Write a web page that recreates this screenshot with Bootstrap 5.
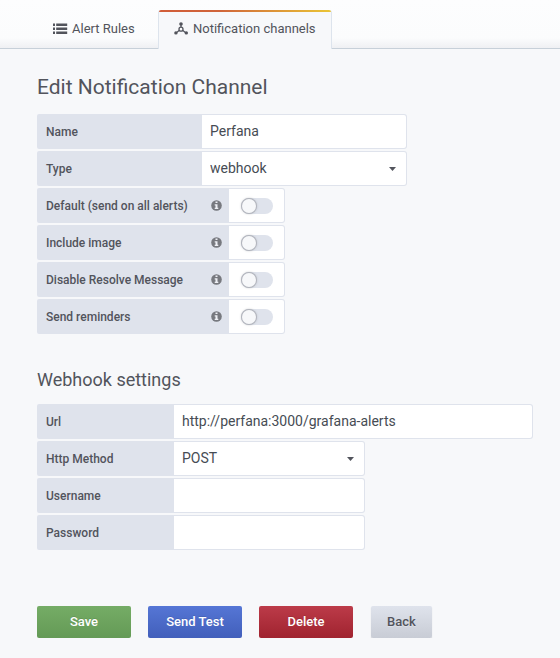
<!DOCTYPE html>
<html lang="en">
<head>
<meta charset="utf-8">
<meta name="viewport" content="width=device-width, initial-scale=1">
<title>Edit Notification Channel</title>
<link href="https://cdn.jsdelivr.net/npm/bootstrap@5.3.0/dist/css/bootstrap.min.css" rel="stylesheet">
<style>
body { font-family: Roboto, "Liberation Sans", sans-serif; font-size: 14px; line-height: 21px; color: #52545c; background: #f7f8fa; }
.page-header { height: 49px; padding: 10px 0 0 37px; border-bottom: 1px solid #c7d0d9; background: linear-gradient(180deg, #fdfdfe 0, #fbfcfd 38px, #eff0f3 48px); }
.page-tabs { border: 0; height: 39px; }
.page-tabs .nav-link { height: 39px; padding: 0 15px 2px; border: 1px solid transparent; border-radius: 3px 3px 0 0; margin: 0; color: #52545c; font-size: 13px; line-height: 35px; }
.page-tabs .tab-rules { width: 121px; }
.page-tabs .nav-link.active { color: #52545c; background: #f7f8fa; border-color: #dde4ed; border-top: 0; border-bottom: 0; width: 174px; position: relative; }
.page-tabs .nav-link.active::before { content: ""; position: absolute; left: 0; right: 0; top: 0; height: 2px; border-radius: 2px 2px 0 0; background: linear-gradient(90deg, #d15c38 0%, #d0643a 35%, #eac435 100%); }
.page-body { padding: 24px 27px 0 37px; }
.page-title { font-size: 21px; line-height: 28px; font-weight: 400; margin: 0 0 13px; }
.section-title { font-size: 18px; line-height: 24px; font-weight: 400; margin: 34px 0 12px; }
.form-line { height: 35px; margin-bottom: 2px; }
.line-label { background: #dfe3ec; font-size: 12px; font-weight: 500; padding: 1px 7.500px 0 9px; border-radius: 2px 0 0 2px; }
.line-label svg { margin-top: -1.500px; }
.w-165 { width: 165px; } .w-192 { width: 192px; } .w-137 { width: 137px; }
.line-input, .line-input:focus { height: 35px; padding: 0 8px 1px; border: 1px solid #dfe3ec; border-left: 0; border-radius: 0 3px 3px 0; font-size: 14px; line-height: 21px; color: #464c54; background-color: #fff; box-shadow: none; }
select.line-input { background-image: url("data:image/svg+xml,%3Csvg xmlns='http://www.w3.org/2000/svg' viewBox='0 0 7 4'%3E%3Cpath fill='%2352545c' d='M0 0h7L3.500 4z'/%3E%3C/svg%3E"); background-size: 7px 4px; background-position: right 10px top 15px; }
.f-205 { width: 205px; } .f-191 { width: 191px; } .f-359 { width: 359px; }
.switch-box { width: 56px; background: #fff; border: 1px solid #dfe3ec; border-left: 0; border-radius: 0 3px 3px 0; padding-left: 12px; }
.switch-track { width: 32px; height: 16px; border-radius: 8px; background: #dfe3ec; }
.switch-knob { width: 14px; height: 14px; margin: 1px; border-radius: 50%; background: #f7f8fa; box-shadow: 0 0 0 1px #b2b5bd, 0 0 3px #8e9199; }
.actions { margin-top: 56px; }
.actions .btn { height: 32px; padding: 0; width: 94px; border: 0; border-radius: 2px; font-size: 13px; font-weight: 500; line-height: 32px; color: #fff; text-shadow: 0 -1px 0 rgba(0,0,0,.1); margin-right: 17px; }
.btn-save { background: linear-gradient(#75ac66, #649a56); }
.btn-test { background: linear-gradient(#5576d5, #425fbb); }
.btn-delete { background: linear-gradient(#bc3b49, #a0232f); }
.actions .btn-back { width: 61px; margin: 0 0 0 1px; color: #52545c; background: linear-gradient(#dfe3ec, #c8ccd5); text-shadow: 0 1px 0 rgba(255,255,255,.3); box-shadow: 0 1px 1px rgba(82,84,92,.25); }
</style>
<script src="https://cdn.jsdelivr.net/npm/bootstrap@5.3.0/dist/js/bootstrap.bundle.min.js"></script>
</head>
<body>
<svg class="d-none" xmlns="http://www.w3.org/2000/svg">
  <symbol id="info" viewBox="0 0 11 11"><circle cx="5.500" cy="5.500" r="5.300" fill="#77797f"/><path fill="#eef0f5" d="M4.500 1.600h2v1.500h-2zM3.700 4.200h2.800v3.600h.8v1.200H3.700V7.800h.8V5.400h-.8z"/></symbol>
</svg>
<header class="page-header">
  <ul class="nav nav-tabs page-tabs flex-nowrap">
    <li class="nav-item"><a class="nav-link tab-rules d-flex align-items-center" href="#">
      <svg class="me-1 flex-shrink-0" width="15" height="12" viewBox="0 0 15 12" fill="#52545c"><path d="M0 .6h2v2.300H0zM3.200 .6h11v2.300h-11zM0 4.600h2v2.300H0zM3.200 4.600h11v2.300h-11zM0 8.600h2v2.300H0zM3.200 8.600h11v2.300h-11z"/></svg><span>Alert Rules</span></a></li>
    <li class="nav-item"><a class="nav-link active d-flex align-items-center" href="#">
      <svg class="me-1 flex-shrink-0" width="15" height="13" viewBox="0 0 15 13" fill="#52545c"><path d="M7 2v4M7 7L2 11M7 7l5 4" fill="none" stroke="#52545c" stroke-width="1.200"/><circle cx="7" cy="2" r="1.800"/><circle cx="1.900" cy="10.900" r="1.700"/><circle cx="12.300" cy="10.900" r="1.700"/><circle cx="7" cy="7.200" r="2" fill="#f7f8fa" stroke="#52545c" stroke-width="1.300"/></svg><span>Notification channels</span></a></li>
  </ul>
</header>
<main class="page-body">
  <h3 class="page-title">Edit Notification Channel</h3>
  <div class="form-line d-flex"><label class="line-label w-165 d-flex align-items-center" for="n">Name</label><input id="n" class="form-control line-input f-205" value="Perfana"></div>
  <div class="form-line d-flex"><label class="line-label w-165 d-flex align-items-center" for="t">Type</label><select id="t" class="form-select line-input f-205"><option>webhook</option></select></div>
  <div class="form-line d-flex"><div class="line-label w-192 d-flex align-items-center justify-content-between"><span>Default (send on all alerts)</span><svg width="11" height="11"><use href="#info"/></svg></div><div class="switch-box d-flex align-items-center"><div class="switch-track d-flex"><div class="switch-knob"></div></div></div></div>
  <div class="form-line d-flex"><div class="line-label w-192 d-flex align-items-center justify-content-between"><span>Include image</span><svg width="11" height="11"><use href="#info"/></svg></div><div class="switch-box d-flex align-items-center"><div class="switch-track d-flex"><div class="switch-knob"></div></div></div></div>
  <div class="form-line d-flex"><div class="line-label w-192 d-flex align-items-center justify-content-between"><span>Disable Resolve Message</span><svg width="11" height="11"><use href="#info"/></svg></div><div class="switch-box d-flex align-items-center"><div class="switch-track d-flex"><div class="switch-knob"></div></div></div></div>
  <div class="form-line d-flex"><div class="line-label w-192 d-flex align-items-center justify-content-between"><span>Send reminders</span><svg width="11" height="11"><use href="#info"/></svg></div><div class="switch-box d-flex align-items-center"><div class="switch-track d-flex"><div class="switch-knob"></div></div></div></div>

  <h4 class="section-title">Webhook settings</h4>
  <div class="form-line d-flex"><label class="line-label w-137 d-flex align-items-center" for="u">Url</label><input id="u" class="form-control line-input f-359" value="http://perfana:3000/grafana-alerts"></div>
  <div class="form-line d-flex"><label class="line-label w-137 d-flex align-items-center" for="m">Http Method</label><select id="m" class="form-select line-input f-191"><option>POST</option></select></div>
  <div class="form-line d-flex"><label class="line-label w-137 d-flex align-items-center" for="us">Username</label><input id="us" class="form-control line-input f-191"></div>
  <div class="form-line d-flex"><label class="line-label w-137 d-flex align-items-center" for="p">Password</label><input id="p" type="password" class="form-control line-input f-191"></div>

  <div class="actions d-flex">
    <button class="btn btn-save">Save</button><button class="btn btn-test">Send Test</button><button class="btn btn-delete">Delete</button><button class="btn btn-back">Back</button>
  </div>
</main>
</body>
</html>
